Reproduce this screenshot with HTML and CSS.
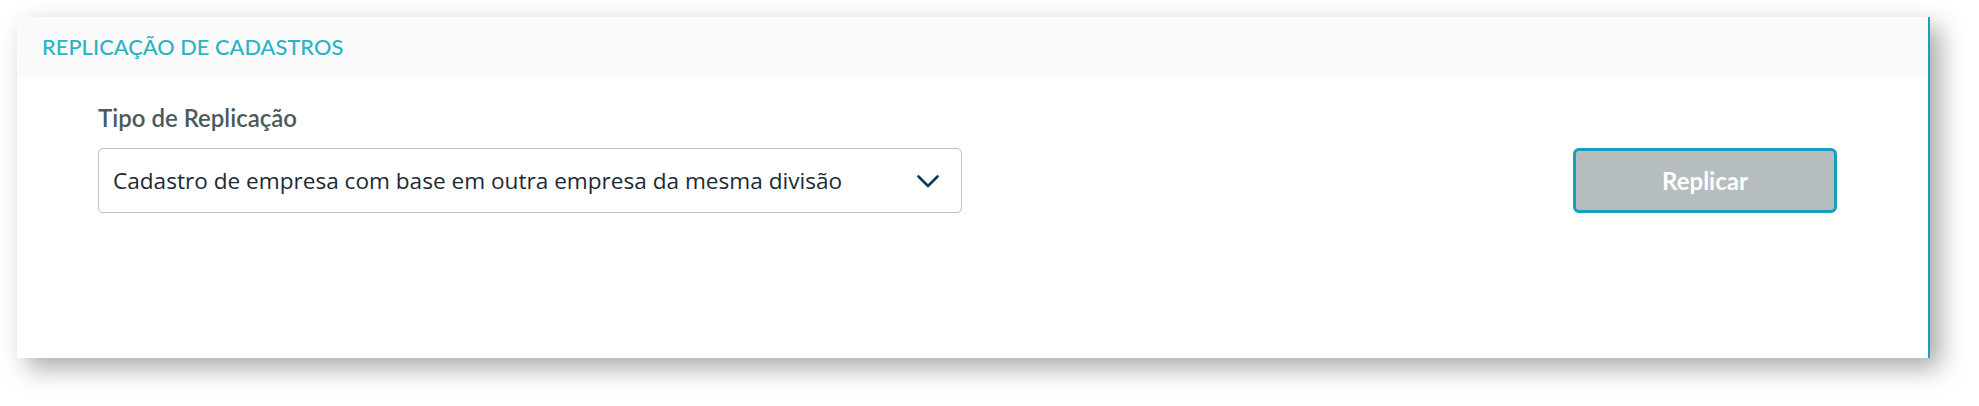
FILE: index.html
```html
<!DOCTYPE html>
<html lang="pt-BR">
<head>
<meta charset="utf-8">
<title>Replicação de Cadastros</title>
<link rel="stylesheet" href="styles.css">
</head>
<body>
<div class="page">
  <section class="card">
    <header class="card-header">
      <h1 class="card-title">REPLICAÇÃO DE CADASTROS</h1>
    </header>
    <div class="card-body">
      <div class="field">
        <label class="field-label">Tipo de Replicação</label>
        <div class="select">
          <span class="select-value">Cadastro de empresa com base em outra empresa da mesma divisão</span>
          <svg class="select-chevron" width="22" height="13" viewBox="0 0 22 13" aria-hidden="true">
            <polyline points="1.5,1.5 11,11 20.5,1.5" fill="none" stroke="#0b3b58" stroke-width="2.6" stroke-linecap="round" stroke-linejoin="round"/>
          </svg>
        </div>
      </div>
      <button class="btn" type="button">Replicar</button>
    </div>
  </section>
</div>
</body>
</html>
```

FILE: styles.css
```css
html, body {
  margin: 0;
  padding: 0;
  background: #ffffff;
}

.page {
  box-sizing: border-box;
  min-height: 406px;
  padding: 17px 0 48px 17px;
}

.card {
  width: 1911px;
  height: 341px;
  background: #ffffff;
  border-right: 2px solid #1a9ec2;
  box-shadow: 10px 10px 24px rgba(0, 0, 0, 0.34);
  display: flex;
  flex-direction: column;
}

.card-header {
  height: 59px;
  background: #fafafa;
  display: flex;
  align-items: center;
  padding-left: 25px;
}

.card-title {
  margin: 0;
  font-family: Lato, "Open Sans", sans-serif;
  font-weight: 500;
  font-size: 21.7px;
  color: #29b3c5;
  letter-spacing: 0.1px;
}

.card-body {
  display: flex;
  justify-content: space-between;
  align-items: flex-end;
  padding: 27px 91px 0 81px;
}

.field {
  display: flex;
  flex-direction: column;
  gap: 16px;
}

.field-label {
  font-family: Lato, "Open Sans", sans-serif;
  font-weight: 600;
  font-size: 24px;
  line-height: 29px;
  color: #4b5a5d;
}

.select {
  box-sizing: border-box;
  width: 864px;
  height: 65px;
  border: 1px solid #b8bfc0;
  border-radius: 5px;
  display: flex;
  align-items: center;
  justify-content: space-between;
  padding: 0 22px 0 14px;
}

.select-value {
  font-family: "Open Sans", "Noto Sans", sans-serif;
  font-size: 22.6px;
  color: #1c2a35;
  line-height: 30px;
}

.select-chevron {
  display: block;
  margin-top: 1px;
}

.btn {
  box-sizing: border-box;
  width: 264px;
  height: 65px;
  background: #b6bdbe;
  border: 3px solid #179dbf;
  border-radius: 6px;
  font-family: Lato, "Open Sans", sans-serif;
  font-weight: 700;
  font-size: 24px;
  color: #ffffff;
  padding: 0;
  cursor: default;
}
```
